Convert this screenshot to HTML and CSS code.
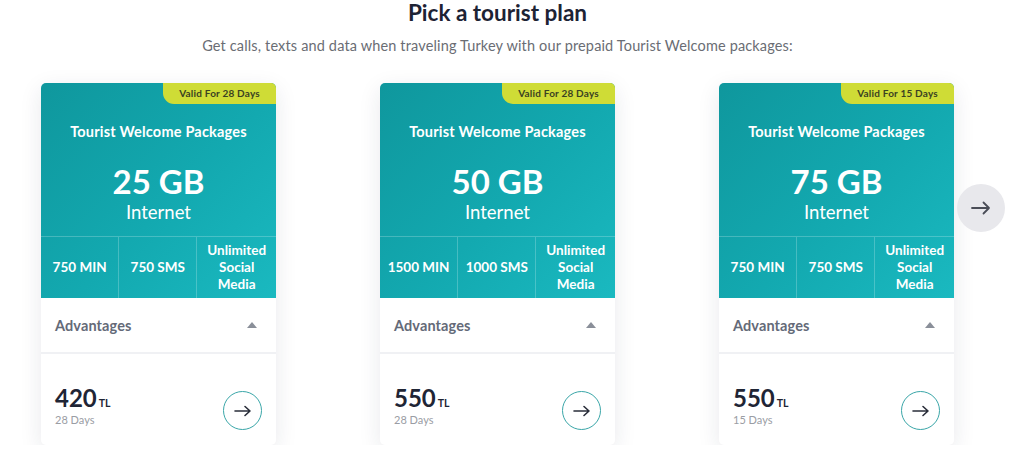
FILE: index.html
```html
<!DOCTYPE html>
<html>
<head>
<meta charset="utf-8">
<link rel="stylesheet" href="styles.css">
</head>
<body>
<div class="wrap">
  <h1 class="title">Pick a tourist plan</h1>
  <p class="subtitle">Get calls, texts and data when traveling Turkey with our prepaid Tourist Welcome packages:</p>
  <div class="row">
    <div class="card">
      <div class="top">
        <div class="badge">Valid For 28 Days</div>
        <div class="pkg">Tourist Welcome Packages</div>
        <div class="gb">25 GB</div>
        <div class="net">Internet</div>
        <div class="stats">
          <div class="stat">750 MIN</div>
          <div class="stat">750 SMS</div>
          <div class="stat">Unlimited Social Media</div>
        </div>
      </div>
      <div class="adv"><span>Advantages</span><span class="tri"></span></div>
      <div class="price">
        <div><div class="amt">420<span class="cur">TL</span></div><div class="days">28 Days</div></div>
        <div class="go"><svg width="18" height="12" viewBox="0 0 18 12"><path d="M1 6H16M11 1.5L16 6L11 10.5" fill="none" stroke="#2a2e3a" stroke-width="1.6" stroke-linecap="round" stroke-linejoin="round"/></svg></div>
      </div>
    </div>
    <div class="card">
      <div class="top">
        <div class="badge">Valid For 28 Days</div>
        <div class="pkg">Tourist Welcome Packages</div>
        <div class="gb">50 GB</div>
        <div class="net">Internet</div>
        <div class="stats">
          <div class="stat">1500 MIN</div>
          <div class="stat">1000 SMS</div>
          <div class="stat">Unlimited Social Media</div>
        </div>
      </div>
      <div class="adv"><span>Advantages</span><span class="tri"></span></div>
      <div class="price">
        <div><div class="amt">550<span class="cur">TL</span></div><div class="days">28 Days</div></div>
        <div class="go"><svg width="18" height="12" viewBox="0 0 18 12"><path d="M1 6H16M11 1.5L16 6L11 10.5" fill="none" stroke="#2a2e3a" stroke-width="1.6" stroke-linecap="round" stroke-linejoin="round"/></svg></div>
      </div>
    </div>
    <div class="card">
      <div class="top">
        <div class="badge">Valid For 15 Days</div>
        <div class="pkg">Tourist Welcome Packages</div>
        <div class="gb">75 GB</div>
        <div class="net">Internet</div>
        <div class="stats">
          <div class="stat">750 MIN</div>
          <div class="stat">750 SMS</div>
          <div class="stat">Unlimited Social Media</div>
        </div>
      </div>
      <div class="adv"><span>Advantages</span><span class="tri"></span></div>
      <div class="price">
        <div><div class="amt">550<span class="cur">TL</span></div><div class="days">15 Days</div></div>
        <div class="go"><svg width="18" height="12" viewBox="0 0 18 12"><path d="M1 6H16M11 1.5L16 6L11 10.5" fill="none" stroke="#2a2e3a" stroke-width="1.6" stroke-linecap="round" stroke-linejoin="round"/></svg></div>
      </div>
    </div>
    <div class="next"><svg width="20" height="14" viewBox="0 0 20 14"><path d="M1 7H18M12.5 1.5L18 7L12.5 12.5" fill="none" stroke="#4a4d57" stroke-width="1.8" stroke-linecap="round" stroke-linejoin="round"/></svg></div>
  </div>
</div>
</body>
</html>
```
FILE: styles.css
```css
* { box-sizing: border-box; }
html, body { margin: 0; background: #fff; }
body { font-family: Lato, "Noto Sans", Arial, sans-serif; color: #1f2535; }
.wrap { width: 954px; padding-left: 41px; }
.title { margin: 0; font-size: 22.5px; line-height: 26px; font-weight: 700; text-align: center; color: #1d2334; }
.subtitle { margin: 10px 0 0; font-size: 14.5px; line-height: 20px; letter-spacing: 0.15px; text-align: center; color: #6a6d74; }
.row { position: relative; display: flex; gap: 104px; margin-top: 27px; }
.card { width: 235px; height: 362px; border-radius: 5px; background: #fff; box-shadow: 0 6px 22px rgba(30, 40, 70, 0.10); overflow: hidden; display: flex; flex-direction: column; }
.top { position: relative; height: 215px; background: linear-gradient(135deg, #0f979d 0%, #13a9b0 55%, #1ab9c0 100%); color: #fff; text-align: center; display: flex; flex-direction: column; }
.badge { position: absolute; top: 0; right: 0; width: 113px; height: 21px; background: #cfdc36; color: #3b4222; font-size: 10px; font-weight: 700; line-height: 21px; text-align: center; letter-spacing: 0.2px; border-bottom-left-radius: 11px; }
.pkg { margin-top: 40px; font-size: 14.5px; font-weight: 700; line-height: 18px; letter-spacing: 0.2px; }
.gb { margin-top: 22px; font-size: 33px; font-weight: 700; line-height: 36px; }
.net { font-size: 18.5px; line-height: 22px; margin-top: 2px; }
.stats { margin-top: auto; height: 62px; display: flex; border-top: 1px solid rgba(255,255,255,0.22); }
.stat { flex: 1; display: flex; align-items: center; justify-content: center; font-size: 13.5px; font-weight: 700; line-height: 17px; padding: 0 2px; border-left: 1px solid rgba(255,255,255,0.22); }
.stat:first-child { border-left: 0; }
.stat:last-child { flex: 1.02; }
.adv { height: 56px; display: flex; align-items: center; justify-content: space-between; padding: 0 19px 0 14px; border-bottom: 2px solid #f0f1f4; font-size: 14.5px; font-weight: 700; color: #646a78; letter-spacing: 0.1px; }
.tri { width: 0; height: 0; border-left: 5px solid transparent; border-right: 5px solid transparent; border-bottom: 6px solid #8a8f99; }
.price { flex: 1; display: flex; align-items: flex-end; justify-content: space-between; padding: 0 14px 17px; }
.amt { font-size: 24px; font-weight: 700; line-height: 20px; color: #1f2535; }
.cur { font-size: 10.5px; margin-left: 2px; }
.days { font-size: 11px; line-height: 14px; color: #9a9da4; margin-top: 0; margin-bottom: 1px; }
.go { width: 39px; height: 39px; border-radius: 50%; border: 1px solid #3aa6a8; display: flex; align-items: center; justify-content: center; margin-bottom: -2px; }
.next { position: absolute; left: 916px; top: 101px; width: 48px; height: 48px; border-radius: 50%; background: #e8e8ec; display: flex; align-items: center; justify-content: center; }
```
